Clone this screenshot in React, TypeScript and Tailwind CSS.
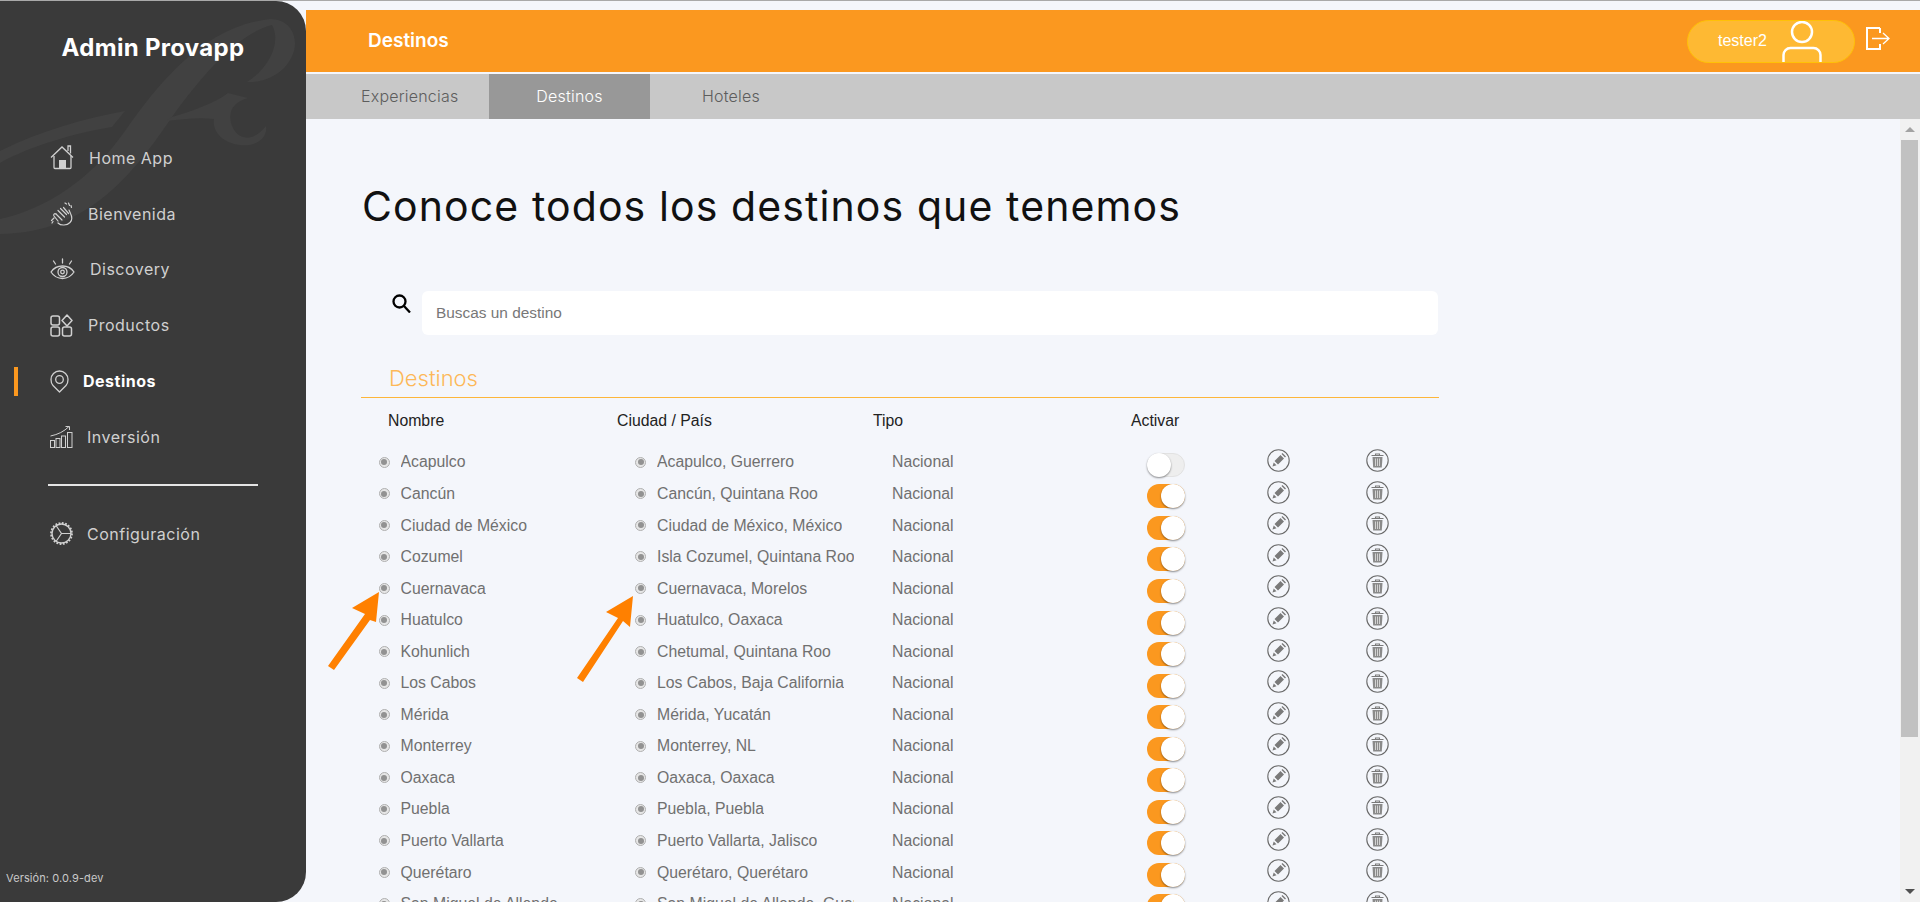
import React from "react";

const rows = [
  ["Acapulco", "Acapulco, Guerrero"],
  ["Cancún", "Cancún, Quintana Roo"],
  ["Ciudad de México", "Ciudad de México, México"],
  ["Cozumel", "Isla Cozumel, Quintana Roo"],
  ["Cuernavaca", "Cuernavaca, Morelos"],
  ["Huatulco", "Huatulco, Oaxaca"],
  ["Kohunlich", "Chetumal, Quintana Roo"],
  ["Los Cabos", "Los Cabos, Baja California"],
  ["Mérida", "Mérida, Yucatán"],
  ["Monterrey", "Monterrey, NL"],
  ["Oaxaca", "Oaxaca, Oaxaca"],
  ["Puebla", "Puebla, Puebla"],
  ["Puerto Vallarta", "Puerto Vallarta, Jalisco"],
  ["Querétaro", "Querétaro, Querétaro"],
  ["San Miguel de Allende", "San Miguel de Allende, Guanajuato"],
];

const HomeIcon = () => (
  <svg width="25" height="25" viewBox="0 0 25 25" fill="none" stroke="#d0d0d0" strokeWidth="1.3">
    <path d="M1 12.500 12 2l11 10.500" />
    <path d="M4 11v11.500a1 1 0 0 0 1 1h15a1 1 0 0 0 1-1V11" />
    <path d="M18 6V1h2.500v7.500" />
    <rect x="9" y="15" width="7" height="8.500" fill="#d0d0d0" stroke="none" />
  </svg>
);

const ClapIcon = () => (
  <svg width="24" height="24" viewBox="0 0 24 24" fill="none" stroke="#d0d0d0" strokeWidth="1.2" strokeLinecap="round">
    <path d="M8 21c3 3 9 2.500 12-.5 3-3 1.500-7 .5-9l-1.500-3.500" />
    <path d="M6 12l6 6M8 8.500l6.500 6.500M10.500 6.500l6 6M13.500 5.500l5 6" />
    <path d="M6 12c-1.500-1-3 .5-2 2l4 5" />
    <path d="M4 16l-2.500 2.500M3 19.500l-1 1.500M15 1l1.500 1M18.500 1l1 2.500M21 3.500l.5 2" />
  </svg>
);

const EyeIcon = () => (
  <svg width="25" height="22" viewBox="0 0 25 22" fill="none" stroke="#d0d0d0" strokeWidth="1.3" strokeLinecap="round">
    <path d="M1 14c3-4.500 7-6 11.500-6S21 9.500 24 14c-3 4.500-7 6.500-11.500 6.500S4 18.500 1 14Z" />
    <circle cx="12.500" cy="14" r="4.500" />
    <circle cx="12.500" cy="14" r="1.800" />
    <path d="M12.500 1v4M3.500 3l2 3M21.500 3l-2 3" />
  </svg>
);

const ProductIcon = () => (
  <svg width="23" height="23" viewBox="0 0 23 23" fill="none" stroke="#d0d0d0" strokeWidth="1.5">
    <rect x="1" y="2" width="8.500" height="9" rx="2" />
    <rect x="1" y="13" width="8.500" height="9" rx="2" />
    <rect x="12.500" y="13" width="9" height="9" rx="2" />
    <path d="M17 1l5 5.500-5 5.500-5-5.500L17 1Z" strokeLinejoin="round" />
  </svg>
);

const PinIcon = () => (
  <svg width="19" height="23" viewBox="0 0 19 23" fill="none" stroke="#d0d0d0" strokeWidth="1.3">
    <path d="M9.500 22 3 15.500C1.500 14 1 12 1 9.500a8.500 8.500 0 0 1 17 0c0 2.500-.5 4.500-2 6L9.500 22Z" strokeLinejoin="round" />
    <circle cx="9.500" cy="9.500" r="3.800" />
  </svg>
);

const ChartIcon = () => (
  <svg width="23" height="23" viewBox="0 0 23 23" fill="none" stroke="#d0d0d0" strokeWidth="1">
    <rect x="0.500" y="15.500" width="4" height="7" />
    <rect x="6" y="13.500" width="4" height="9" />
    <rect x="11.500" y="11" width="4" height="11.500" />
    <rect x="17.500" y="7.500" width="4.500" height="15" />
    <path d="M0.500 11C8 9.500 14 6.500 19 1.500M15.500 1.500H19.500V5" />
  </svg>
);

const GearIcon = () => (
  <svg width="23" height="23" viewBox="0 0 23 23" fill="none" stroke="#d0d0d0">
    <circle cx="11.500" cy="11.500" r="9.500" strokeWidth="1.400" />
    <circle cx="11.500" cy="11.500" r="10.500" strokeWidth="1.800" strokeDasharray="1.800 1.500" />
    <path d="M11.500 11.500h9.500M11.500 11.500 6 3.500M11.500 11.500 6 19.500" strokeWidth="1.200" />
  </svg>
);

const nav = [
  { label: "Home App", icon: <HomeIcon />, gap: "ml-[14px]", text: "text-[#d0d0d0]" },
  { label: "Bienvenida", icon: <ClapIcon />, gap: "ml-[13px]", text: "text-[#d0d0d0]" },
  { label: "Discovery", icon: <EyeIcon />, gap: "ml-[15px]", text: "text-[#d0d0d0]" },
  { label: "Productos", icon: <ProductIcon />, gap: "ml-[13px]", text: "text-[#d0d0d0]" },
  { label: "Destinos", icon: <PinIcon />, gap: "ml-[8px]", text: "text-white font-bold", active: true },
  { label: "Inversión", icon: <ChartIcon />, gap: "ml-[12px]", text: "text-[#d0d0d0]" },
];

const NavItem = ({ item }: { item: (typeof nav)[number] }) => (
  <div className="flex items-center h-[55.8px]">
    <div className={`ml-[14px] w-[4px] h-[29px] ${item.active ? "bg-[#fb981f]" : ""}`} />
    <div className="ml-[32px] flex items-center w-[25px]">{item.icon}</div>
    <span className={`${item.gap} text-[16px] tracking-[0.5px] ${item.text}`}>{item.label}</span>
  </div>
);

const Watermark = () => (
  <svg className="absolute left-0 top-0" width="306" height="260" viewBox="0 0 306 260" fill="#414141">
    <path d="M0 218C45 208 90 180 125 130 160 80 205 25 270 18 290 18 298 35 294 50 288 70 268 82 247 81 268 68 282 42 272 24 240 32 205 70 172 116 135 170 90 232 0 233Z" />
    <path d="M0 150C40 130 85 117 125 110L112 126C75 132 30 145 0 162Z" />
    <path d="M172 116C192 110 215 102 228 92L248 97C235 101 228 108 231 122 235 136 250 145 266 125 268 138 255 146 240 144 222 142 212 130 214 118 198 116 184 118 166 120Z" />
  </svg>
);

const Sidebar = () => (
  <aside className="relative w-[306px] shrink-0 h-full bg-[#3a3a3a] rounded-r-[30px] overflow-hidden flex flex-col font-['Inter',sans-serif]">
    <Watermark />
    <div className="relative flex flex-col h-full">
      <div className="pt-[27px] h-[67px] text-center text-[24px] tracking-[0.3px] leading-[40px] font-bold text-white">
        Admin Provapp
      </div>
      <div className="mt-[62px]">
        {nav.map((item) => (
          <NavItem item={item} key={item.label} />
        ))}
      </div>
      <div className="mt-[19px] ml-[48px] w-[210px] h-[2px] bg-[#e4e4e4]" />
      <div className="mt-[20px]">
        <div className="flex items-center h-[55.8px]">
          <div className="ml-[50px] w-[25px] flex items-center">
            <GearIcon />
          </div>
          <span className="ml-[12px] text-[16px] tracking-[0.5px] text-[#d0d0d0]">Configuración</span>
        </div>
      </div>
      <div className="mt-auto pb-[16px] pl-[6px] text-[11px] tracking-[0.1px] text-[#c9c9c9]">Versión: 0.0.9-dev</div>
    </div>
  </aside>
);

const UserPill = () => (
  <div className="flex items-center w-[168px] h-[43px] rounded-full bg-[#feb933] border border-[#ffc107] overflow-hidden">
    <span className="ml-[30px] text-[16px] text-white font-['Liberation_Sans',sans-serif]">tester2</span>
    <svg className="ml-[14px]" width="42" height="43" viewBox="0 0 42 43" fill="none" stroke="#fff" strokeWidth="2.500">
      <circle cx="21" cy="12" r="10" />
      <path d="M2.500 43V35a7 7 0 0 1 7-7h23a7 7 0 0 1 7 7v8" />
    </svg>
  </div>
);

const LogoutIcon = () => (
  <svg width="24" height="24" viewBox="0 0 24 24" fill="none" stroke="#fff" strokeWidth="2">
    <path d="M14 1H1v21h13v-5M14 6V1" />
    <path d="M6 11.500h16M17 6l6 5.500-6 5.500" strokeWidth="1.300" />
  </svg>
);

const Header = () => (
  <div className="h-[62px] bg-[#fb981f] flex items-center">
    <h2 className="ml-[62px] text-[19px] font-semibold text-white font-['Inter',sans-serif]">Destinos</h2>
    <div className="ml-auto flex items-center mr-[30px]">
      <UserPill />
      <div className="ml-[11px] -mt-[4px]">
        <LogoutIcon />
      </div>
    </div>
  </div>
);

const Tabs = () => (
  <div className="mt-[2px] h-[45px] pb-[2px] bg-[#c8c8c8] flex text-[16px] tracking-[0.2px] font-['Inter',sans-serif] font-light shrink-0">
    <div className="w-[183px] pl-[55px] flex items-center text-[#5d5d5d]">Experiencias</div>
    <div className="w-[161px] -mb-[2px] pb-[2px] flex items-center justify-center bg-[#989898] text-white">Destinos</div>
    <div className="pl-[52px] flex items-center text-[#5d5d5d]">Hoteles</div>
  </div>
);

const Radio = () => (
  <div className="w-[11px] h-[11px] rounded-full border border-[#b0b0b0] bg-[#e6e6e6] flex items-center justify-center shrink-0">
    <div className="w-[6px] h-[6px] rounded-full bg-[#929292]" />
  </div>
);

const Toggle = ({ on }: { on: boolean }) =>
  on ? (
    <div className="mt-[5px] w-[38px] h-[24px] rounded-full bg-[#fb981f] flex justify-end">
      <div className="w-[24px] h-[24px] rounded-full bg-white shadow-[0_1px_2px_rgba(0,0,0,0.45)]" />
    </div>
  ) : (
    <div className="mt-[5px] w-[38px] h-[24px] rounded-full bg-[#eeeeee] border border-[#e2e2e2] flex justify-start">
      <div className="-ml-px -mt-px w-[24px] h-[24px] rounded-full bg-white shadow-[0_1px_2px_rgba(0,0,0,0.45)]" />
    </div>
  );

const EditIcon = () => (
  <svg className="-mt-[3px]" width="23" height="23" viewBox="0 0 23 23" fill="none">
    <circle cx="11.500" cy="11.500" r="10.700" stroke="#6a6a6a" strokeWidth="1.100" />
    <path d="M5.500 17.500l1.200-4 2.800 2.800-4 1.200ZM7.500 12l6-6 3.500 3.500-6 6L7.500 12ZM14.500 5l1-1 3.500 3.500-1 1L14.500 5Z" fill="#7a7a7a" />
  </svg>
);

const TrashIcon = () => (
  <svg className="-mt-[3px]" width="23" height="23" viewBox="0 0 23 23" fill="none">
    <circle cx="11.500" cy="11.500" r="10.700" stroke="#6a6a6a" strokeWidth="1.100" />
    <path d="M5.500 6.500h12M9.500 6.500V5h4v1.500" stroke="#7a7a7a" strokeWidth="1.100" />
    <path d="M6.500 8h10l-.7 10.500H7.200L6.500 8Z" fill="#8a8a8a" />
    <path d="M9.500 9.500v7.500M11.500 9.500v7.500M13.500 9.500v7.500" stroke="#e4e4e4" strokeWidth="0.800" />
  </svg>
);

const DestinosTable = () => (
  <div className="w-[1078px] ml-px font-['Liberation_Sans',sans-serif]">
    <div className="h-[42px] pl-[28px] flex items-end pb-[4.500px] border-b border-b-[#fdb63a] box-content -mt-[2px]">
      <span className="text-[22px] leading-[28px] font-['Inter',sans-serif] font-light text-[#fdb858]">Destinos</span>
    </div>
    <div className="h-[46px] pl-[27px] flex items-center text-[15.800px] text-[#222]">
      <span className="w-[229px]">Nombre</span>
      <span className="w-[256px]">Ciudad / País</span>
      <span className="w-[258px]">Tipo</span>
      <span>Activar</span>
    </div>
    <div className="pl-[17.500px] mt-[3px]">
      {rows.map(([name, city], i) => (
        <div
          className="grid grid-cols-[256.500px_257px_255px_120px_99px_23px] h-[31.55px] items-center text-[15.800px] text-[#707070]"
          key={name}
        >
          <div className="flex items-center gap-[11px]">
            <Radio />
            <span className="truncate">{name}</span>
          </div>
          <div className="flex items-center gap-[11px] pr-[38px]">
            <Radio />
            <span className="overflow-hidden whitespace-nowrap">{city}</span>
          </div>
          <span>Nacional</span>
          <Toggle on={i > 0} />
          <EditIcon />
          <TrashIcon />
        </div>
      ))}
    </div>
  </div>
);

const Scrollbar = () => (
  <div className="w-[20px] shrink-0 bg-[#f1f1f1] flex flex-col pr-[2px] pl-px">
    <div className="h-[21px] shrink-0 flex items-center justify-center">
      <div className="w-0 h-0 border-x-[5px] border-x-transparent border-b-[5px] border-b-[#a3a3a3]" />
    </div>
    <div className="h-[597px] bg-[#c1c1c1]" />
    <div className="mt-auto h-[21px] flex items-center justify-center">
      <div className="w-0 h-0 border-x-[5px] border-x-transparent border-t-[5px] border-t-[#505050]" />
    </div>
  </div>
);

export default function App() {
  return (
    <div className="h-screen overflow-hidden bg-[#f4f6fb] flex flex-col">
      <div className="h-px bg-[#a9a9a9] shrink-0" />
      <div className="flex flex-1 min-h-0">
        <Sidebar />
        <main className="flex-1 min-w-0 flex flex-col pt-[9px]">
          <Header />
          <Tabs />
          <div className="flex flex-1 min-h-0">
            <div className="relative flex-1 min-w-0 overflow-hidden pl-[54px]">
              <h1 className="pt-[61px] pl-[2px] text-[41px] tracking-[1.100px] leading-[52px] font-normal text-[#111] font-['Inter',sans-serif]">
                Conoce todos los destinos que tenemos
              </h1>
              <div className="mt-[61px] ml-[32px] flex w-[1046px]">
                <svg className="mt-px" width="19" height="19" viewBox="0 0 19 19" fill="none" stroke="#000" strokeWidth="2.300">
                  <circle cx="7.500" cy="7.500" r="6" />
                  <path d="m12 12 6 6.500" />
                </svg>
                <div className="ml-[11px] flex-1 h-[44px] mt-[-2px] rounded-[6px] bg-white flex items-center pl-[14px] text-[15.400px] text-[#777] font-['Liberation_Sans',sans-serif]">
                  Buscas un destino
                </div>
              </div>
              <div className="mt-[17px]">
                <DestinosTable />
              </div>
              <svg className="absolute left-[22px] top-[471px]" width="54" height="82" viewBox="0 0 54 82" fill="#ff8000">
                <path d="M0 76 37 24 24 18 51 2 48 32 42 30 6 80Z" />
              </svg>
              <svg className="absolute left-[271px] top-[475px]" width="58" height="90" viewBox="0 0 58 90" fill="#ff8000">
                <path d="M0 84 41 24 29 18 56 2 53 33 46 27 6 88Z" />
              </svg>
            </div>
            <Scrollbar />
          </div>
        </main>
      </div>
    </div>
  );
}
